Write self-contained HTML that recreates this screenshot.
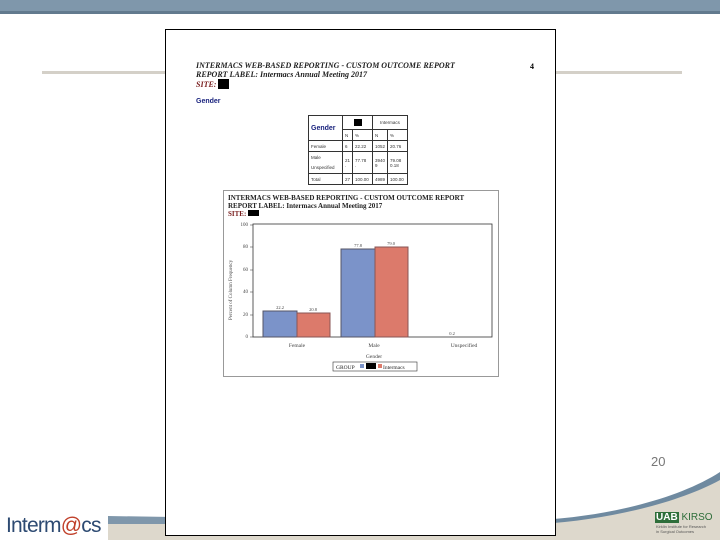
<!DOCTYPE html>
<html><head><meta charset="utf-8"><style>
*{margin:0;padding:0;box-sizing:border-box}
body{width:720px;height:540px;overflow:hidden;background:#fff;position:relative;font-family:"Liberation Sans",sans-serif}
.a{position:absolute}
.ser{font-family:"Liberation Serif",serif}
table{border-collapse:collapse;font-size:4.5px;color:#333}
td{border:1px solid #333;padding:0 2px;height:11px}
</style></head><body>
<div class="a" style="left:0;top:0;width:720px;height:11px;background:#7f97ab"></div>
<div class="a" style="left:0;top:11px;width:720px;height:3px;background:#627a8e"></div>
<div class="a" style="left:42px;top:71px;width:640px;height:3px;background:#d4d0c8"></div>
<svg class="a" style="left:0;top:440px" width="720" height="100">
<path d="M108 77 L560 80 C620 78 680 60 720 38 L720 100 L108 100Z" fill="#ddd8cc"/>
<path d="M108 76 L360 80 L360 84 L108 84Z" fill="#7f97ab"/>
<path d="M540 80 C610 76 680 58 720 32 L720 40 C680 62 610 80 540 84Z" fill="#6f8aa0"/>
</svg>
<div class="a" style="left:6px;top:514px;font-size:21px;color:#2d4a72;letter-spacing:-0.8px">Interm<span style="color:#c0402a">@</span>cs</div>
<div class="a" style="left:651px;top:454px;font-size:13px;color:#777">20</div>
<div class="a" style="left:655px;top:512px;font-size:10px;color:#2e6e3a"><b style="background:#2e6e3a;color:#fff;padding:0 1px">UAB</b> KIRSO</div>
<div class="a" style="left:656px;top:524px;font-size:4px;color:#555;line-height:5px">Kirklin Institute for Research<br>in Surgical Outcomes</div>

<div class="a" style="left:165px;top:29px;width:391px;height:507px;border:1px solid #000;background:#fff"></div>
<div class="a ser" style="left:196px;top:61px;font-size:8px;font-style:italic;font-weight:bold;color:#222;line-height:9px">INTERMACS WEB-BASED REPORTING - CUSTOM OUTCOME REPORT<br>REPORT LABEL: Intermacs Annual Meeting 2017<br><span style="color:#7a2020">SITE:</span> <span style="display:inline-block;width:11px;height:10px;background:#000;vertical-align:-2px"></span></div>
<div class="a ser" style="left:530px;top:62px;font-size:8px;font-weight:bold">4</div>
<div class="a" style="left:196px;top:98px;font-size:7px;font-weight:bold;color:#1a237e">Gender</div>
<div class="a" style="left:308px;top:115px">
<table>
<tr><td rowspan="2" style="width:34px;font-size:7px;font-weight:bold;color:#1a237e;height:24px">Gender</td><td colspan="2" style="text-align:center;height:14px"><span style="display:inline-block;width:8px;height:7px;background:#000"></span></td><td colspan="2" style="text-align:center">Intermacs</td></tr>
<tr><td>N</td><td style="width:20px">%</td><td>N</td><td style="width:20px">%</td></tr>
<tr><td>Female</td><td>6</td><td>22.22</td><td>1052</td><td>20.76</td></tr>
<tr><td style="height:22px;line-height:10px">Male<br>Unspecified</td><td>21<br>.</td><td>77.78<br>.</td><td>3940<br>9</td><td>79.08<br>0.18</td></tr>
<tr><td>Total</td><td>27</td><td>100.00</td><td>4989</td><td>100.00</td></tr>
</table></div>

<div class="a" style="left:223px;top:190px;width:276px;height:187px;border:1px solid #999;background:#fff"></div>
<div class="a ser" style="left:228px;top:195px;font-size:7px;font-weight:bold;color:#222;line-height:7.5px">INTERMACS WEB-BASED REPORTING - CUSTOM OUTCOME REPORT<br>REPORT LABEL: Intermacs Annual Meeting 2017<br><span style="color:#7a2020">SITE:</span> <span style="display:inline-block;width:11px;height:6px;background:#000"></span></div>
<svg class="a ser" style="left:223px;top:190px" width="276" height="187" font-family="Liberation Serif" font-size="5" fill="#444">
<rect x="30" y="34" width="239" height="113" fill="none" stroke="#333" stroke-width="0.8"/>
<g stroke="#333" stroke-width="0.6"><path d="M27 35H30M27 57H30M27 80H30M27 102H30M27 125H30M27 147H30"/></g>
<g text-anchor="end"><text x="25" y="36">100</text><text x="25" y="58">80</text><text x="25" y="81">60</text><text x="25" y="103">40</text><text x="25" y="126">20</text><text x="25" y="148">0</text></g>
<rect x="40" y="121" width="34" height="26" fill="#7b93c9" stroke="#556"/>
<rect x="74" y="123" width="33" height="24" fill="#dc7a6b" stroke="#855"/>
<rect x="118" y="59" width="34" height="88" fill="#7b93c9" stroke="#556"/>
<rect x="152" y="57" width="33" height="90" fill="#dc7a6b" stroke="#855"/>
<g text-anchor="middle" font-size="4.5"><text x="57" y="119">22.2</text><text x="90" y="121">20.8</text><text x="135" y="57">77.8</text><text x="168" y="55">79.0</text><text x="229" y="145">0.2</text></g>
<g text-anchor="middle" font-size="5.5"><text x="74" y="157">Female</text><text x="151" y="157">Male</text><text x="241" y="157">Unspecified</text><text x="151" y="168">Gender</text></g>
<text transform="translate(9,130) rotate(-90)" font-size="5">Percent of Column Frequency</text>
<rect x="110" y="172" width="84" height="9" fill="#fff" stroke="#333" stroke-width="0.6"/>
<text x="113" y="179" font-size="5.5" fill="#222">GROUP</text>
<rect x="137" y="174" width="4" height="4" fill="#7b93c9"/><rect x="143" y="173" width="10" height="6" fill="#000"/>
<rect x="155" y="174" width="4" height="4" fill="#dc7a6b"/><text x="160" y="179" font-size="5.5" fill="#222">Intermacs</text>
</svg>
</body></html>
